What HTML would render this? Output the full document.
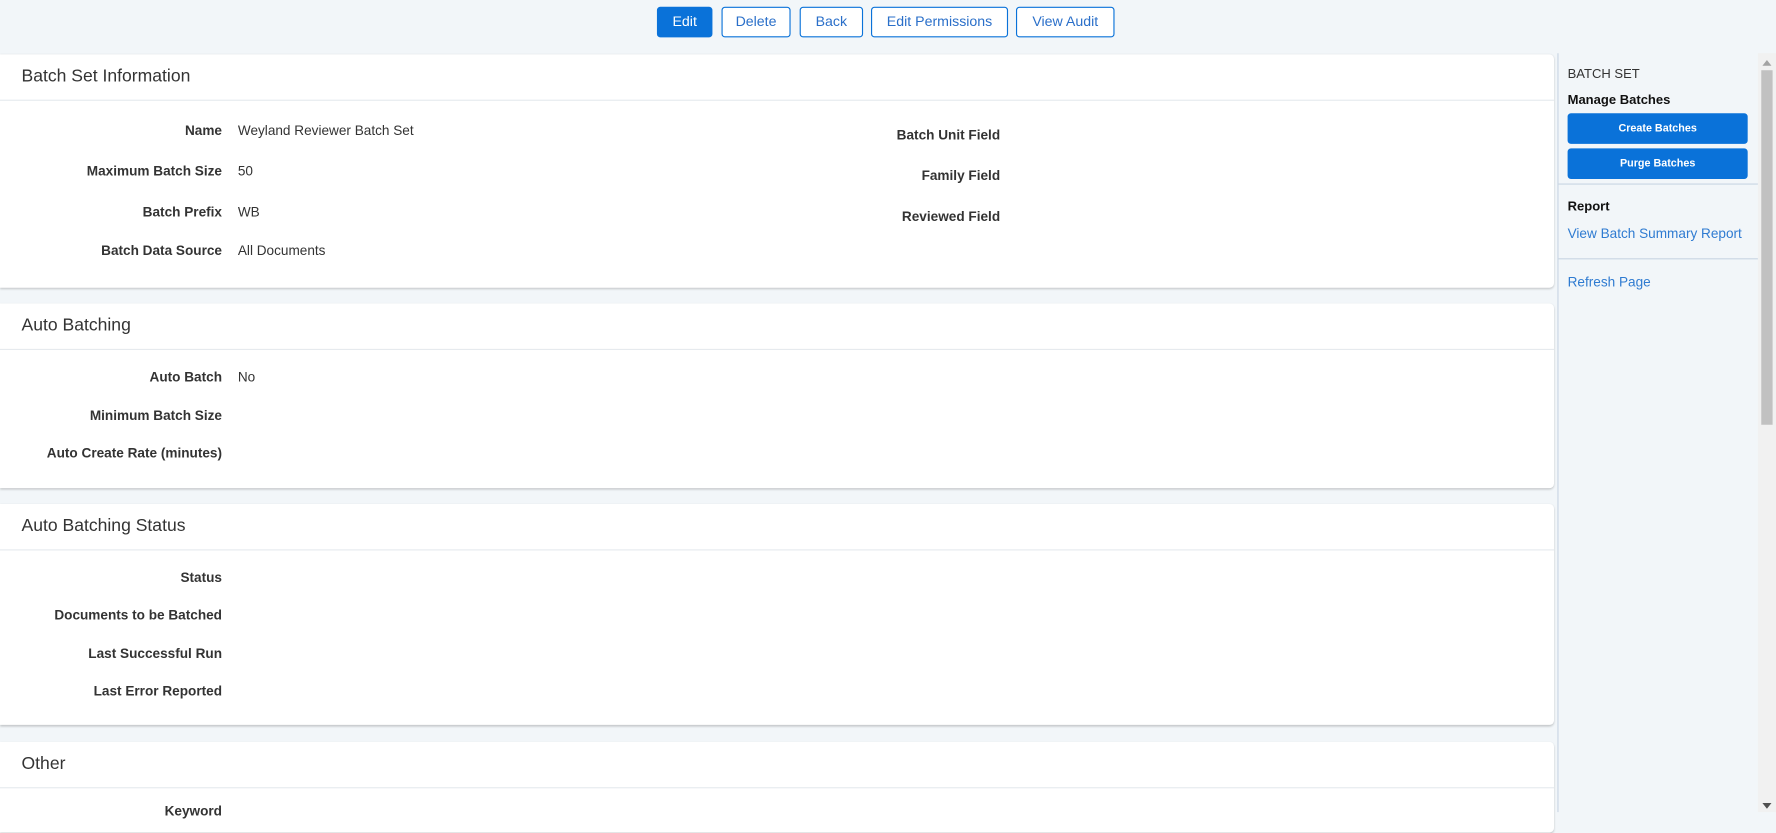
<!DOCTYPE html>
<html><head><meta charset="utf-8"><style>
html,body{margin:0;padding:0;width:1776px;height:812px;overflow:hidden;background:#f2f6f9;}
#w{position:absolute;left:0;top:0;width:1568px;height:717px;transform:scale(1.13265);transform-origin:0 0;font-family:"Liberation Sans",Arial,sans-serif;color:#333;background:#f2f6f9;}
.btn{position:absolute;top:6px;height:25px;border:1px solid #0a72d9;border-radius:3px;background:#fff;color:#2a6fc9;font-size:12.5px;line-height:25px;text-align:center;}
.card{position:absolute;left:0;width:1372px;background:#fff;border-radius:0 4px 4px 0;box-shadow:0 1px 2px rgba(0,0,0,.2);}
.card h2{margin:0;height:40px;line-height:40px;padding-left:19px;font-size:15.5px;font-weight:normal;color:#333;border-bottom:1px solid #e6eaee;}
.l{position:absolute;font-size:12px;font-weight:bold;color:#333;text-align:right;white-space:nowrap;}
.v{position:absolute;font-size:12px;color:#333;white-space:nowrap;}
.sb{position:absolute;left:1375px;top:47px;width:177px;height:670px;border-left:1px solid #c9d5e3;background:#f2f6f9;}
.sbt{position:absolute;left:8px;font-size:11.5px;white-space:nowrap;}
.sbb{position:absolute;left:8px;width:159px;height:27px;background:#0a72d9;border-radius:3px;color:#fff;font-weight:bold;font-size:9.5px;line-height:27px;text-align:center;}
.lk{color:#2f7bd1;font-size:12px;}
</style></head><body><div id="w">
<div class="btn" style="left:580px;width:47px;background:#0a72d9;color:#fff;">Edit</div>
<div class="btn" style="left:637px;width:59px;">Delete</div>
<div class="btn" style="left:706px;width:54px;">Back</div>
<div class="btn" style="left:769px;width:119px;">Edit Permissions</div>
<div class="btn" style="left:897px;width:85px;">View Audit</div>

<div class="card" style="top:48px;height:206px;"><h2>Batch Set Information</h2>
<div class="l" style="right:1176px;top:60px">Name</div><div class="v" style="left:210px;top:60px">Weyland Reviewer Batch Set</div>
<div class="l" style="right:1176px;top:96px">Maximum Batch Size</div><div class="v" style="left:210px;top:96px">50</div>
<div class="l" style="right:1176px;top:132px">Batch Prefix</div><div class="v" style="left:210px;top:132px">WB</div>
<div class="l" style="right:1176px;top:166px">Batch Data Source</div><div class="v" style="left:210px;top:166px">All Documents</div>
<div class="l" style="right:489px;top:64px">Batch Unit Field</div>
<div class="l" style="right:489px;top:100px">Family Field</div>
<div class="l" style="right:489px;top:136px">Reviewed Field</div>
</div>

<div class="card" style="top:268px;height:163px;"><h2>Auto Batching</h2>
<div class="l" style="right:1176px;top:58px">Auto Batch</div><div class="v" style="left:210px;top:58px">No</div>
<div class="l" style="right:1176px;top:92px">Minimum Batch Size</div>
<div class="l" style="right:1176px;top:125px">Auto Create Rate (minutes)</div>
</div>

<div class="card" style="top:445px;height:195px;"><h2>Auto Batching Status</h2>
<div class="l" style="right:1176px;top:58px">Status</div>
<div class="l" style="right:1176px;top:91px">Documents to be Batched</div>
<div class="l" style="right:1176px;top:125px">Last Successful Run</div>
<div class="l" style="right:1176px;top:158px">Last Error Reported</div>
</div>

<div class="card" style="top:655px;height:80px;"><h2>Other</h2>
<div class="l" style="right:1176px;top:54px">Keyword</div>
</div>

<div class="sb">
<div class="sbt" style="top:13px;color:#333">BATCH SET</div>
<div class="sbt" style="top:36px;font-weight:bold;color:#111">Manage Batches</div>
<div class="sbb" style="top:53px">Create Batches</div>
<div class="sbb" style="top:84px">Purge Batches</div>
<div style="position:absolute;left:0;top:115px;width:177px;border-top:1px solid #c9d5e3"></div>
<div class="sbt" style="top:130px;font-weight:bold;color:#111">Report</div>
<div class="sbt lk" style="top:152px">View Batch Summary Report</div>
<div style="position:absolute;left:0;top:181px;width:177px;border-top:1px solid #c9d5e3"></div>
<div class="sbt lk" style="top:195px">Refresh Page</div>
</div>

<div style="position:absolute;left:1552px;top:47px;width:16px;height:670px;background:#f1f1f1;">
<div style="position:absolute;left:4px;top:6px;width:0;height:0;border-left:4px solid transparent;border-right:4px solid transparent;border-bottom:5px solid #a3a3a3"></div>
<div style="position:absolute;left:3px;top:15px;width:10px;height:313px;background:#c1c1c1"></div>
<div style="position:absolute;left:4px;bottom:3px;width:0;height:0;border-left:4px solid transparent;border-right:4px solid transparent;border-top:5px solid #505050"></div>
</div>
</div></body></html>
